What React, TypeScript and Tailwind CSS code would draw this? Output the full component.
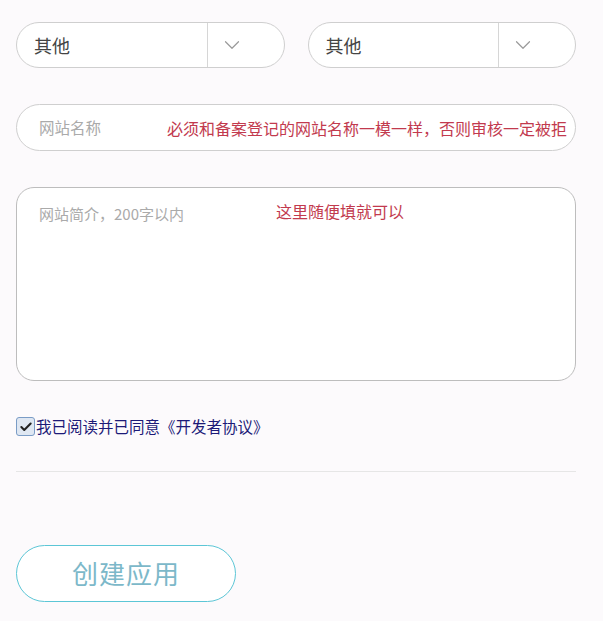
import { Check, ChevronDown } from "lucide-react";

const cjk = { fontFamily: '"Noto Sans CJK SC", "Noto Sans", sans-serif' };

function Select({ value }: { value: string }) {
    return (
        <div className="flex h-[46px] flex-1 items-stretch rounded-full border border-[#cfcfcf] bg-white">
            <span className="flex flex-1 items-center pl-[17px] text-[18px] text-[#444]">{value}</span>
            <span className="flex w-[77px] items-center border-l border-[#d6d6d6] pl-[11px]">
                <ChevronDown className="h-[26px] w-[26px] text-[#9a9a9a]" strokeWidth={1.1} />
            </span>
        </div>
    );
}

export default function App() {
    return (
        <div className="min-h-[621px] w-[603px] bg-[#fcfafc] pl-4 pr-[27px] pt-[22px]" style={cjk}>
            {/* Category pickers */}
            <div className="flex gap-[23px]">
                <Select value="其他" />
                <Select value="其他" />
            </div>

            {/* Site name */}
            <div className="mt-[36px] flex h-[47px] items-center rounded-full border border-[#cfcfcf] bg-white pl-[22px]">
                <span className="w-[128px] shrink-0 text-[15.5px] text-[#aaa]">网站名称</span>
                <span className="whitespace-nowrap text-[16px] text-[#c23a4e]">必须和备案登记的网站名称一模一样，否则审核一定被拒</span>
            </div>

            {/* Description */}
            <div className="mt-[36px] flex h-[194px] items-start rounded-[18px] border border-[#bdbdbd] bg-white pl-[22px] pt-[11px]">
                <span className="mt-[4px] w-[237px] shrink-0 text-[15px] text-[#aaa]">网站简介，200字以内</span>
                <span className="text-[16px] text-[#c23a4e]">这里随便填就可以</span>
            </div>

            {/* Agreement */}
            <div className="mt-[34px] flex items-center">
                <span className="flex h-[19px] w-[19px] items-center justify-center rounded-[3px] border border-[#7a9cc6] bg-[#dfe7f2]">
                    <Check className="h-[14px] w-[14px] text-[#222]" strokeWidth={3.5} />
                </span>
                <span className="ml-[1px] text-[15.5px] text-[#1c1a78]">我已阅读并已同意《开发者协议》</span>
            </div>

            <div className="mt-[33px] border-t border-[#e6e6e6]" />

            {/* Submit */}
            <button className="mt-[73px] flex h-[57px] w-[220px] items-center justify-center rounded-full border-[1.5px] border-[#5cc6d6] bg-white pb-[3px] text-[26px] tracking-[1px] text-[#7cb8c9]">
                创建应用
            </button>
        </div>
    );
}
